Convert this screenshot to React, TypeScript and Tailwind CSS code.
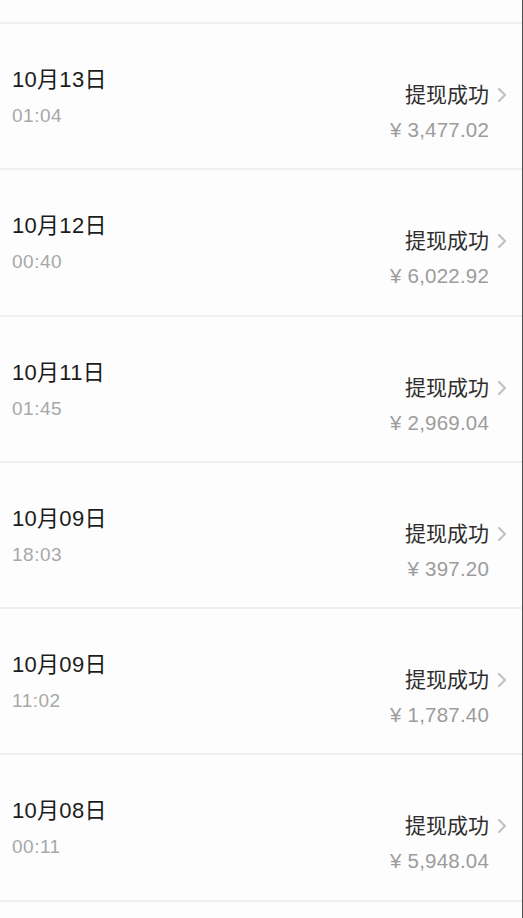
const RECORDS = [
  { date: '10月13日', time: '01:04', amount: '3,477.02' },
  { date: '10月12日', time: '00:40', amount: '6,022.92' },
  { date: '10月11日', time: '01:45', amount: '2,969.04' },
  { date: '10月09日', time: '18:03', amount: '397.20' },
  { date: '10月09日', time: '11:02', amount: '1,787.40' },
  { date: '10月08日', time: '00:11', amount: '5,948.04' },
];

const Chevron = () => (
  <svg width="12" height="16" viewBox="0 0 12 16" fill="none" className="ml-[7px] shrink-0">
    <path d="M3 2 L9 8 L3 14" stroke="#c2c2c2" strokeWidth="2.2" strokeLinecap="round" strokeLinejoin="round" />
  </svg>
);

export default function App() {
  return (
    <div className='min-h-[918px] w-[523px] border-r border-[#4d4d4d] bg-[#fdfdfd] [font-family:"Liberation_Sans","Noto_Sans_CJK_SC",sans-serif]'>
      <div className="h-[24px] border-b-2 border-[#efefef]" />
      {RECORDS.map((record, index) => (
        <div
          key={`${record.date}-${index}`}
          className="flex h-[146.3px] items-start justify-between border-b-2 border-[#efefef] pl-[12px] pr-[14px]"
        >
          <div className="flex flex-col pt-[41px]">
            <p className="text-[22px] leading-[30px] tracking-[0.3px] text-[#1c1c1c]">{record.date}</p>
            <p className="mt-[9px] text-[19px] leading-[24px] tracking-[0.5px] text-[#a8a8a8]">{record.time}</p>
          </div>
          <div className="flex flex-col items-end pt-[57px]">
            <div className="flex items-center">
              <p className="text-[21px] leading-[28px] text-[#2e2e2e]">提现成功</p>
              <Chevron />
            </div>
            <p className="mr-[19px] mt-[8px] text-[20.5px] leading-[26px] tracking-[0.2px] text-[#9c9c9c]">¥ {record.amount}</p>
          </div>
        </div>
      ))}
    </div>
  );
}
